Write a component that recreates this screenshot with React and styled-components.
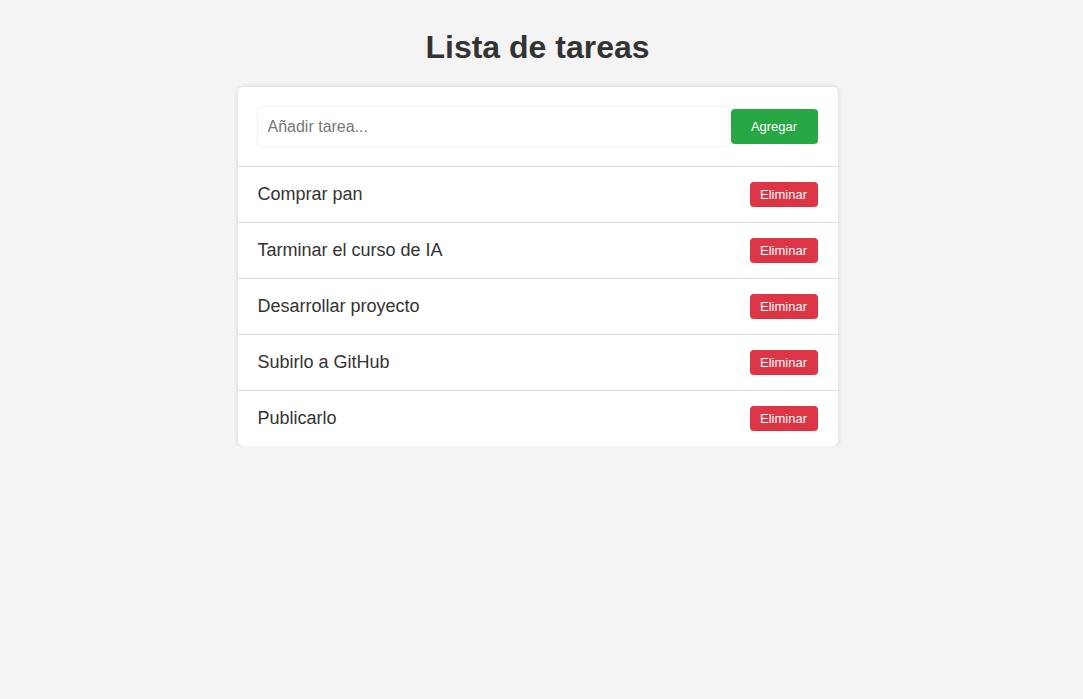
import styled, { createGlobalStyle } from 'styled-components';

const GlobalStyle = createGlobalStyle`
  body {
    margin: 0;
    background: #f4f4f4;
    font-family: "Liberation Sans", Arial, sans-serif;
    color: #333;
  }
`;

const Page = styled.div`
  display: flex;
  flex-direction: column;
  align-items: center;
  padding: 29px 8px 0 0;
`;

const Title = styled.h1`
  margin: 0 0 21px;
  font-size: 32px;
  line-height: 37px;
  font-weight: bold;
  color: #333;
`;

const Card = styled.div`
  width: 600px;
  background: #fff;
  border-radius: 5px;
  box-shadow: 0 0 5px rgba(0, 0, 0, 0.15);
  overflow: hidden;
`;

const Form = styled.form`
  display: flex;
  align-items: center;
  gap: 2px;
  padding: 20px;
  border-bottom: 1px solid #ddd;
`;

const Input = styled.input`
  flex: 1;
  height: 39px;
  box-sizing: border-box;
  padding: 0 10px;
  border: none;
  border-radius: 4px;
  box-shadow: 0 0 3px rgba(0, 0, 0, 0.12);
  font-family: inherit;
  font-size: 16px;
  color: #333;
  outline: none;

  &::placeholder {
    color: #777;
  }
`;

const Button = styled.button`
  border: none;
  border-radius: 4px;
  color: #fff;
  font-family: inherit;
  font-size: 13px;
  cursor: pointer;
  background: ${(p) => (p.danger ? '#dc3545' : '#28a745')};
  height: ${(p) => (p.danger ? '25px' : '35px')};
  width: ${(p) => (p.danger ? '68px' : '87px')};
  padding: 0;
`;

const List = styled.ul`
  list-style: none;
  margin: 0;
  padding: 0;
`;

const Item = styled.li`
  display: flex;
  align-items: center;
  justify-content: space-between;
  height: 55px;
  padding: 0 20px;
  font-size: 18px;
  color: #333;

  & + & {
    border-top: 1px solid #ddd;
  }
`;

const tasks = [
  'Comprar pan',
  'Tarminar el curso de IA',
  'Desarrollar proyecto',
  'Subirlo a GitHub',
  'Publicarlo',
];

export default function App() {
  return (
    <>
      <GlobalStyle />
      <Page>
        <Title>Lista de tareas</Title>
        <Card>
          <Form onSubmit={(e) => e.preventDefault()}>
            <Input placeholder="Añadir tarea..." />
            <Button type="submit">Agregar</Button>
          </Form>
          <List>
            {tasks.map((t) => (
              <Item key={t}>
                <span>{t}</span>
                <Button danger>Eliminar</Button>
              </Item>
            ))}
          </List>
        </Card>
      </Page>
    </>
  );
}
